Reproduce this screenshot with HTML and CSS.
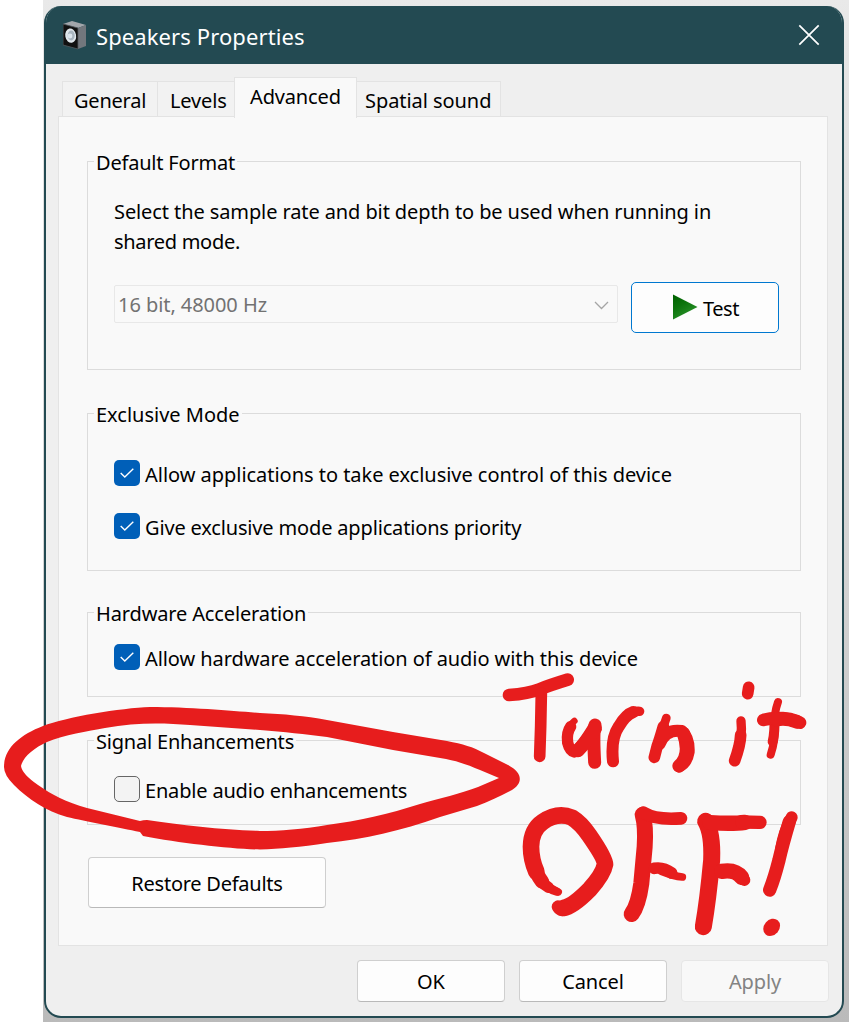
FILE: index.html
```html
<!DOCTYPE html>
<html lang="en">
<head>
<meta charset="utf-8">
<title>Speakers Properties</title>
<link rel="stylesheet" href="styles.css">
</head>
<body>
<div class="backdrop">
<main class="window">
  <header class="titlebar">
    <svg class="speaker" width="24" height="29" viewBox="0 0 24 29">
      <path d="M0 3 9 0 23 4 15 7Z" fill="#a2a6ab"/>
      <path d="M15 7 23 4V25L15 28Z" fill="#73777d"/>
      <path d="M0 3 15 7V28L0 24Z" fill="#111"/>
      <path d="M0 3 15 7V28L0 24Z" fill="none" stroke="#555a60" stroke-width=".8"/>
      <ellipse cx="7.7" cy="14.7" rx="5.4" ry="7.2" fill="#dfe6eb" transform="rotate(-10 7.7 14.7)"/>
      <ellipse cx="8.2" cy="14.5" rx="3.5" ry="5" fill="#a9b5bf"/>
      <circle cx="7" cy="15" r="2.4" fill="#dce5ed"/>
    </svg>
    <h1 class="title"><span class="t-title">Speakers Properties</span></h1>
    <svg class="close" width="22" height="22" viewBox="0 0 22 22"><path d="M1.3 1.3 20.7 20.7M20.7 1.3 1.3 20.7" stroke="#fff" stroke-width="1.7"/></svg>
  </header>
  <nav class="tabs">
    <div class="tab general"><span class="t-general">General</span></div>
    <div class="tab levels"><span class="t-levels">Levels</span></div>
    <div class="tab active"><span class="t-advanced">Advanced</span></div>
    <div class="tab spatial"><span class="t-spatial">Spatial sound</span></div>
  </nav>
  <section class="panel">
    <div class="group format">
      <div class="legend"><span class="t-format">Default Format</span></div>
      <p class="hint"><span class="t-hint1">Select the sample rate and bit depth to be used when running in</span><br><span class="t-hint2">shared mode.</span></p>
      <div class="row">
        <div class="select"><span class="t-rate">16 bit, 48000 Hz</span>
          <svg width="15" height="9" viewBox="0 0 15 9"><path d="M1 1 7.5 7.5 14 1" fill="none" stroke="#a5a5a5" stroke-width="1.3"/></svg>
        </div>
        <div class="button test">
          <svg width="25" height="26" viewBox="0 0 25 26"><defs><linearGradient id="play" x1="0" y1="0" x2=".6" y2="1"><stop offset="0" stop-color="#006000"/><stop offset=".45" stop-color="#0c740c"/><stop offset="1" stop-color="#2c942c"/></linearGradient></defs><path d="M0 .5 24.5 13 0 25.5Z" fill="url(#play)"/></svg>
          <span class="t-test">Test</span>
        </div>
      </div>
    </div>
    <div class="group exclusive">
      <div class="legend"><span class="t-exclusive">Exclusive Mode</span></div>
      <div class="check"><i class="box on"><svg width="14" height="10" viewBox="0 0 14 10"><path d="M.7 5 4.8 9 13.3.8"/></svg></i><span class="t-allow">Allow applications to take exclusive control of this device</span></div>
      <div class="check"><i class="box on"><svg width="14" height="10" viewBox="0 0 14 10"><path d="M.7 5 4.8 9 13.3.8"/></svg></i><span class="t-give">Give exclusive mode applications priority</span></div>
    </div>
    <div class="group hardware">
      <div class="legend"><span class="t-hardware">Hardware Acceleration</span></div>
      <div class="check"><i class="box on"><svg width="14" height="10" viewBox="0 0 14 10"><path d="M.7 5 4.8 9 13.3.8"/></svg></i><span class="t-accel">Allow hardware acceleration of audio with this device</span></div>
    </div>
    <div class="group signal">
      <div class="legend"><span class="t-signal">Signal Enhancements</span></div>
      <div class="check"><i class="box"></i><span class="t-enable">Enable audio enhancements</span></div>
    </div>
    <div class="button restore"><span class="t-restore">Restore Defaults</span></div>
  </section>
  <footer class="actions">
    <div class="button"><span class="t-ok">OK</span></div>
    <div class="button"><span class="t-cancel">Cancel</span></div>
    <div class="button disabled"><span class="t-apply">Apply</span></div>
  </footer>
</main>
</div>
<svg class="ink" width="849" height="1022" viewBox="0 0 849 1022">
  <path class="ring" fill-rule="evenodd" d="M4 767C4 748 20 735 43 726C66 717 121 708 150 707C190 707 235 711 260 713C284 714 305 716 327 720L393 732L447 741C463 744 473 747 484 753L508 765C523 773 523 783 512 790C501 796 490 801 477 806L440 817C400 831 365 839 327 843C300 847 280 849 260 849.500C230 849 180 843 143 836L140 832C120 828 85 821 67 817C46 811 28 799 14 785Q4 775 4 767ZM21 766C23 757 34 748 47 742C64 735 88 731 105 728C136 722 165 723 190 725L260 730C284 732 305 734 327 737L393 750L446 759C461 762 470 766 480 770L499 778L478 787C462 793 438 799 420 804C389 814 358 821 327 825C303 829 280 831 260 831C225 830 180 825 147 820Q143 820 140 821L87 808C66 802 52 795 38 785Q22 774 21 766Z"/>
  <g transform="translate(490 660) scale(.33333)">
    <path stroke-width="38" d="M57 105Q115 101 148 88T233 59"/>
    <path stroke-width="35" d="M154 100 152 200 149 289"/>
    <path stroke-width="20" d="M253 183Q236 197 232 215"/>
    <path stroke-width="34" d="M242 200Q229 218 233 248Q239 273 253 276Q277 259 313 198"/>
    <path stroke-width="39" d="M315 195Q309 220 314 307"/>
    <path stroke-width="40" d="M316 205Q290 245 264 272" />
    <path stroke-width="36" d="M369 304Q362 235 386 200Q407 164 430 156"/>
    <path stroke-width="28" d="M449 154Q430 152 412 168"/>
    <path stroke-width="26" d="M529 174Q515 215 506 240"/>
    <path stroke-width="35" d="M520 200Q507 245 502 257L493 292"/>
    <path stroke-width="36" d="M509 252Q526 206 575 213Q598 234 596 276Q590 310 567 319"/>
    <path stroke-width="40" d="M580 220Q604 286 567 318"/>
    <path stroke-width="28" d="M753 183Q758 230 743 265"/>
    <path stroke-width="35" d="M752 225Q751 255 734 302"/>
    <path stroke-width="35" d="M776 82 773 101"/>
    <path stroke-width="24" d="M864 126Q852 160 854 195Q857 240 842 284"/>
    <path stroke-width="30" d="M853 175Q855 215 848 245"/>
    <path stroke-width="38" d="M820 180Q870 166 930 188"/>
    <path stroke-width="42" d="M860 178Q890 172 920 185"/>
  </g>
  <g transform="translate(500 770) scale(.33333)">
    <path stroke-width="22" d="M175 366Q150 353 130 338"/>
    <path stroke-width="25" d="M170 365Q140 355 125 335"/>
    <path stroke-width="34" d="M145 352Q122 340 112 310"/>
    <path stroke-width="43" d="M126 335Q108 312 98 270"/>
    <path stroke-width="50" d="M109 305Q93 268 93 230Q94 179 128 156Q173 125 216 143Q242 159 267 195Q315 264 315 283Q310 312 269 358Q219 409 190 414"/>
    <path stroke-width="38" d="M174 410Q180 423 195 418"/>
    <path stroke-width="48" d="M428 134Q438 170 434 230L424 340Q415 405 395 432"/>
    <path stroke-width="38" d="M430 128Q468 151 543 145"/>
    <path stroke-width="35" d="M463 295Q490 290 515 309"/>
    <path stroke-width="23" d="M485 304Q520 318 547 321"/>
    <path stroke-width="51" d="M617 154Q638 190 635 270Q624 390 610 470"/>
    <path stroke-width="46" d="M630 158Q700 162 735 157"/>
    <path stroke-width="40" d="M725 156 780 157"/>
    <path stroke-width="46" d="M665 304Q706 297 725 322"/>
    <path stroke-width="36" d="M715 315 733 330"/>
    <path stroke-width="36" d="M875 142Q852 185 843 238"/>
    <path stroke-width="40" d="M868 155Q846 230 837 270Q823 325 809 360"/>
    <ellipse cx="815" cy="472" rx="23" ry="28" transform="rotate(40 815 472)"/>
  </g>
</svg>
</body>
</html>
```

FILE: styles.css
```css
* { box-sizing: border-box; }
body { margin: 0; width: 849px; height: 1022px; overflow: hidden; background: #fff; position: relative; color: #000; font: 20px/30px "Noto Sans", "Open Sans", sans-serif; }
span { white-space: nowrap; }
.backdrop { margin-left: 43px; height: 1022px; padding: 6px 5px 4px 1px; background: linear-gradient(#e9e9e9, #e2e2e2 10%, #d6d6d6 50%, #bababa); }
.window { width: 800px; height: 1012px; border: 2px solid #234a52; border-top: 0; border-radius: 17px; background: #efefef; overflow: hidden; display: flex; flex-direction: column; }
.titlebar { height: 58px; flex: none; background: #234a52; color: #fff; display: flex; align-items: center; padding: 0 22px 0 17px; }
.title { margin: 1px 0 0 9px; font-size: 22px; font-weight: 400; line-height: 30px; letter-spacing: .1px; }
.close { margin-left: auto; }
.tabs { height: 53px; flex: none; display: flex; align-items: flex-end; padding-left: 16px; }
.tab { height: 36px; border: 1px solid #e3e3e3; border-bottom: 0; border-right: 0; background: #f2f2f2; padding: 4px 0 0 11px; }
.general { width: 95px; }
.levels { width: 77px; padding-left: 12px; }
.active { width: 123px; height: 41px; border-right: 1px solid #e3e3e3; background: #f9f9f9; margin-bottom: -1px; position: relative; padding: 4px 0 0 15px; }
.spatial { width: 144px; border-right: 1px solid #e3e3e3; border-left: 0; padding-left: 8px; }
.panel { width: 770px; height: 830px; flex: none; margin: -1px 0 0 12px; border: 1px solid #e3e3e3; background: #f9f9f9; padding: 44px 26px 0 28px; }
.group { width: 714px; border: 1px solid #dcdcdc; padding-left: 26px; }
.legend { width: fit-content; height: 30px; margin: -14px 0 0 -20px; padding: 0 2px; background: #f9f9f9; }
.format { height: 209px; }
.exclusive { height: 158px; margin-top: 43px; }
.hardware { height: 85px; margin-top: 41px; }
.signal { height: 85px; margin-top: 43px; }
.hint { margin: 19px 0 0; }
.row { display: flex; align-items: flex-start; gap: 13px; margin-top: 25px; }
.select { width: 504px; height: 38px; margin-top: 3px; border: 1px solid #e8e8e8; border-radius: 2px; display: flex; align-items: center; justify-content: space-between; padding: 2px 8px 0 3px; color: #727272; }
.button { width: 148px; height: 42px; border: 1px solid #cfcfcf; border-bottom-color: #b9b9b9; border-radius: 4px; background: #fdfdfd; display: flex; align-items: center; justify-content: center; }
.test { height: 51px; border-color: #0078d0; border-radius: 5px; gap: 5px; padding-left: 2px; }
.test svg { margin-bottom: 2px; }
.test span { padding-top: 2px; }
.check { display: flex; gap: 5px; height: 30px; align-items: center; }
.box { width: 26px; height: 26px; flex: none; border: 1.500px solid #666; border-radius: 5px; background: #f3f3f3; display: flex; align-items: center; justify-content: center; margin-bottom: 4px; }
.on { background: #005fb8; border: 0; }
.on path { fill: none; stroke: #fff; stroke-width: 1.400; }
.exclusive .check { margin-top: 30px; }
.exclusive .check + .check { margin-top: 23px; }
.hardware .check { margin-top: 15px; }
.signal .check { margin-top: 19px; }
.restore { width: 238px; height: 51px; margin: 32px 0 0 1px; }
.restore span { padding-top: 2px; }
.actions { display: flex; gap: 14px; margin: 14px 0 0 311px; }
.actions span { padding-top: 1px; }
.disabled { color: #838383; background: #f8f8f8; border-color: #e6e6e6; }
.t-general { letter-spacing: -.22px; }
.t-levels, .t-advanced { letter-spacing: -.15px; }
.t-spatial { letter-spacing: -.06px; }
.t-format { letter-spacing: -.2px; }
.t-hint1 { letter-spacing: -.1px; }
.t-hint2 { letter-spacing: -.3px; }
.t-rate { letter-spacing: -.06px; }
.t-test { letter-spacing: -.5px; }
.t-allow { letter-spacing: -.03px; }
.t-give { letter-spacing: -.16px; }
.t-hardware { letter-spacing: -.14px; }
.t-accel { letter-spacing: -.08px; }
.t-signal { letter-spacing: -.2px; }
.t-enable { letter-spacing: -.18px; }
.t-restore { letter-spacing: -.25px; }
.t-cancel, .t-apply { letter-spacing: -.12px; }
.ink { position: absolute; left: 0; top: 0; pointer-events: none; fill: none; stroke: #e71d1d; stroke-linecap: round; stroke-linejoin: round; }
.ink .ring, .ink ellipse { fill: #e71d1d; stroke: none; }
```
